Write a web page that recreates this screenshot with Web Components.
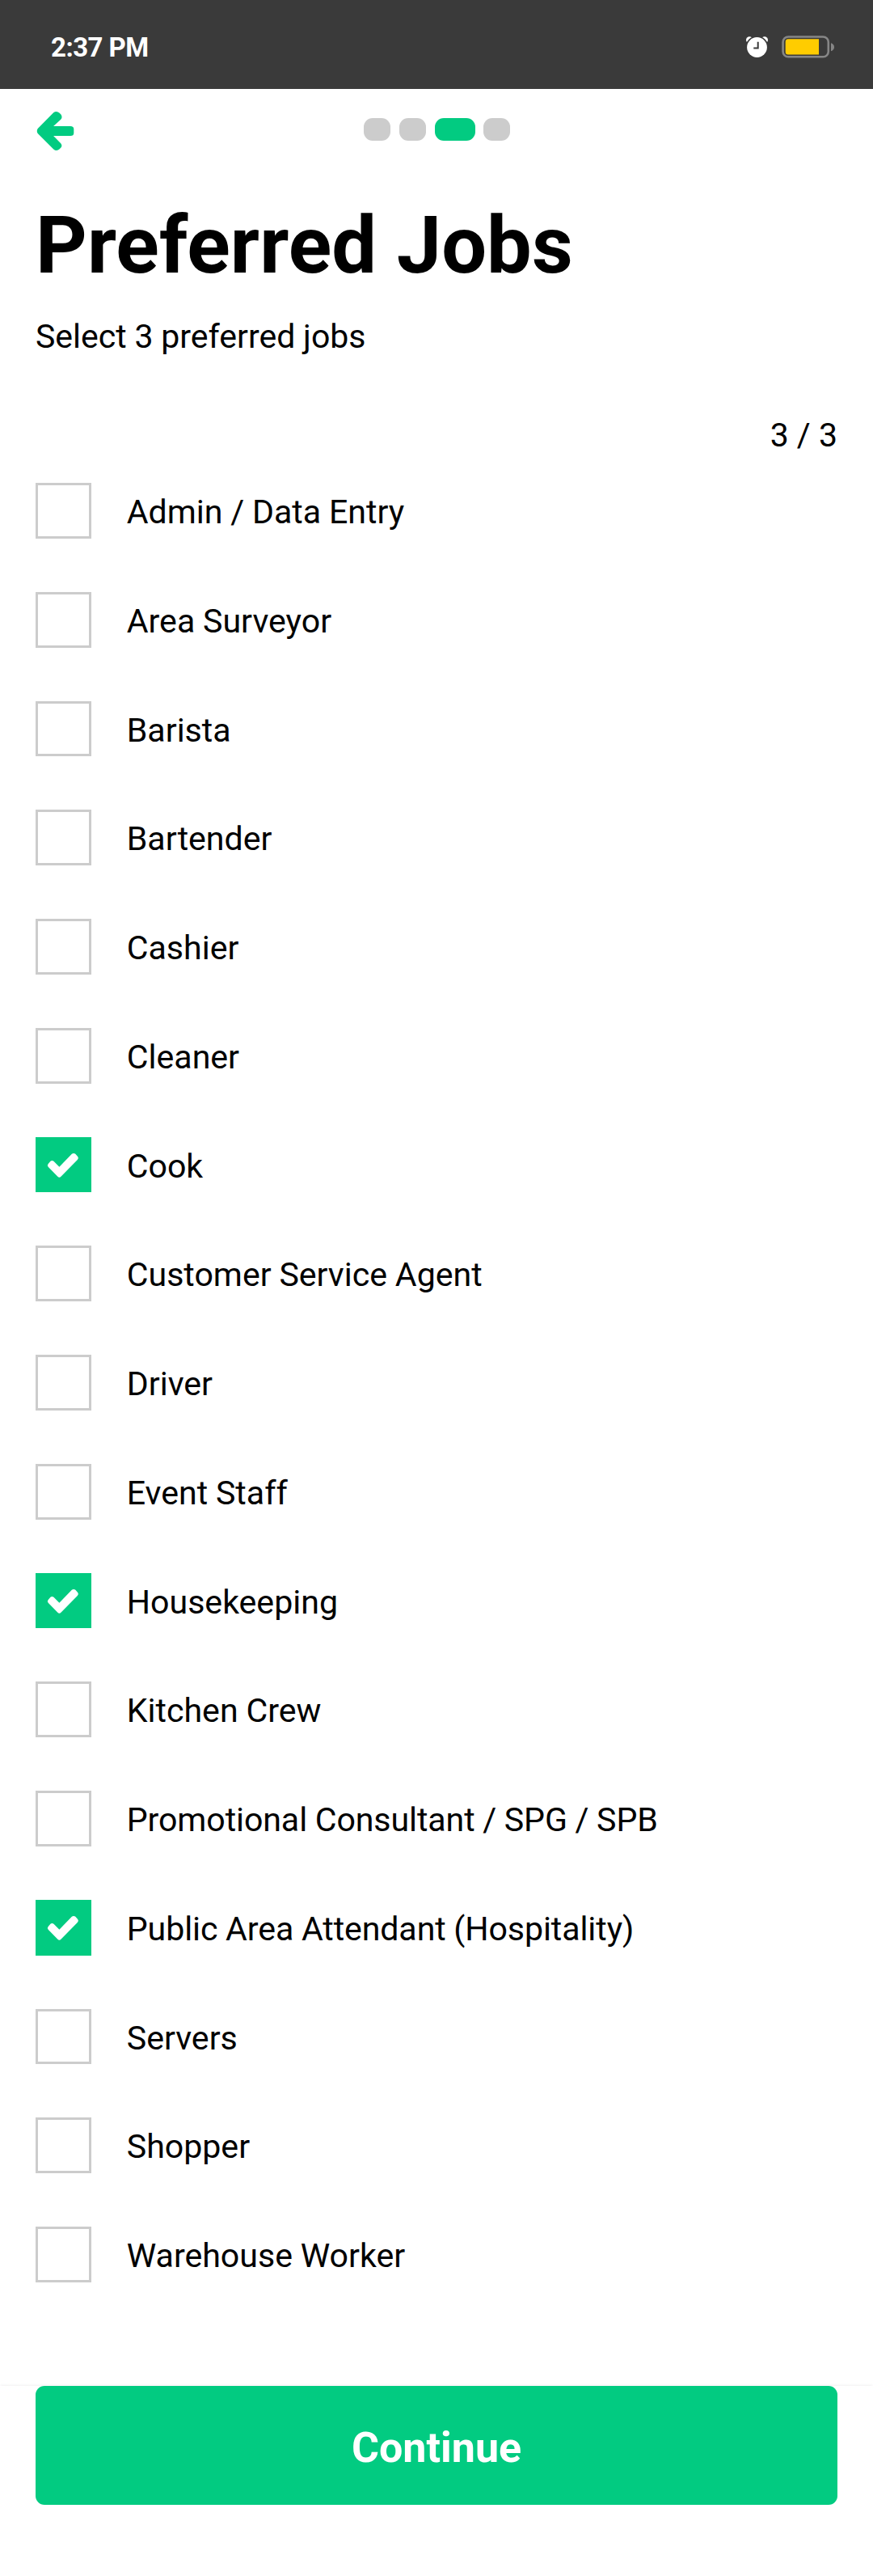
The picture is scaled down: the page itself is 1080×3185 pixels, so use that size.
<!DOCTYPE html>
<html lang="en">
<head>
<meta charset="utf-8">
<title>Preferred Jobs</title>
<style>
html, body { margin: 0; background: #fff; }
body { font-family: Roboto, sans-serif; color: #000; }
</style>
</head>
<body>
<jobs-screen></jobs-screen>
<script>
const define = (name, html, setup) => {
  const t = document.createElement('template');
  t.innerHTML = html;
  customElements.define(name, class extends HTMLElement {
    connectedCallback() {
      if (this.shadowRoot) return;
      this.attachShadow({ mode: 'open' }).append(t.content.cloneNode(true));
      if (setup) setup(this, this.shadowRoot);
    }
  });
};

define('status-bar', `
<style>
:host { display: flex; height: 110px; box-sizing: border-box; padding: 5px 47px 0 63px; align-items: center; justify-content: space-between; background: #3a3a3a; color: #fff; }
span { padding-top: 2px; font-size: 33px; line-height: 40px; font-weight: 700; letter-spacing: -.55px; }
div { display: flex; align-items: center; gap: 16px; }
svg { display: block; }
</style>
<span><slot></slot></span>
<div>
  <svg width="30" height="28" viewBox="0 0 30 28">
    <circle cx="6.2" cy="5.5" r="4.2" fill="#fff"/>
    <circle cx="24.8" cy="5.5" r="4.2" fill="#fff"/>
    <circle cx="15.5" cy="14.5" r="14" fill="#3a3a3a"/>
    <circle cx="15.5" cy="14.5" r="12.4" fill="#fff"/>
    <path d="M16.7 7.8V15.4H11.3" fill="none" stroke="#3a3a3a" stroke-width="2"/>
  </svg>
  <svg width="66" height="28" viewBox="0 0 66 28">
    <rect x="1.6" y="1.5" width="56.2" height="24.8" rx="6.5" fill="none" stroke="#868686" stroke-width="2.6"/>
    <path d="M8 4.3H46V23.5H8Q4.7 23.5 4.7 20V8Q4.7 4.3 8 4.3Z" fill="#fc0"/>
    <path d="M61 9.2Q65 10.5 65 14.2T61 19.2Z" fill="#868686"/>
  </svg>
</div>`);

define('step-dots', `
<style>
:host { display: flex; gap: 11px; margin-left: 1px; }
i { width: 33px; height: 28px; border-radius: 11px; background: #ccc; }
i.on { width: 50px; background: #02cb81; margin-right: -1px; }
</style>`, (host, root) => {
  for (let n = 1; n <= +host.getAttribute('total'); n++) {
    const i = document.createElement('i');
    if (n === +host.getAttribute('current')) i.className = 'on';
    root.append(i);
  }
});

define('nav-header', `
<style>
:host { display: grid; grid-template-columns: 1fr auto 1fr; align-items: center; height: 100px; padding: 0 44px; }
svg { display: block; margin-top: 4px; }
</style>
<svg width="49" height="50" viewBox="0 0 49 50" fill="#02cb81">
  <path d="M22.2 2.2Q26 -.6 29.7 2.8Q34.5 6.6 31.2 10.7L22.1 19H43Q47.3 19 47.3 22.5V27.5Q47.3 31 43 31H22.1L31.2 40.3Q34.2 44 29.7 47.3Q26 50.6 22.2 47.5L2.7 28Q.8 25 2.7 22Z"/>
</svg>
<slot></slot>`);

define('page-heading', `
<style>
:host { display: block; padding: 33px 44px 0; }
h1 { margin: 0; font-size: 99px; line-height: 120px; font-weight: 700; letter-spacing: .1px; }
p { margin: 28px 0 0; font-size: 41px; line-height: 50px; word-spacing: -.4px; }
</style>
<h1><slot></slot></h1><p><slot name="hint"></slot></p>`);

define('selection-count', `
<style>:host { display: block; padding: 72px 44px 0; text-align: right; font-size: 41px; line-height: 50px; }</style>
<slot></slot>`);

define('job-option', `
<style>
:host { display: flex; align-items: center; gap: 44px; height: 68.75px; font-size: 41.1px; line-height: 50px; word-spacing: -.4px; }
:host([tight]) { letter-spacing: -.09px; }
b { box-sizing: border-box; width: 68.75px; height: 68.75px; border: 3px solid #ccc; flex: none; }
:host([checked]) b { border: 0; background: #02cb81; }
svg { display: none; width: 68.75px; height: 68.75px; }
:host([checked]) svg { display: block; }
span { padding-top: 3.5px; }
</style>
<b><svg viewBox="0 0 69 69"><path fill="#fff" d="M15.7 33Q14 35 15.7 36.8L27.5 49Q29.5 50.8 31.5 49L52 28Q54 26 52.4 24L49.5 20.8Q47.3 19.3 45 20.8L29.5 37L22.5 29.8Q20.5 28.2 18.5 29.8Z"/></svg></b>
<span><slot></slot></span>`);

define('job-list', `
<style>:host { display: flex; flex-direction: column; gap: 66px; padding: 34px 44px 0; }</style>
<slot></slot>`);

define('bottom-action', `
<style>
:host { display: block; padding: 0 44px 88px; background: #fff; box-shadow: 0 -1px 3px rgba(0,0,0,.06); }
button { display: block; width: 100%; height: 147px; padding: 6px 0 0; border: 0; border-radius: 11px; background: #02cb81; color: #fff; font: 700 52px/62px Roboto, sans-serif; }
</style>
<button><slot></slot></button>`);

const jobs = ['Admin / Data Entry', 'Area Surveyor', 'Barista', 'Bartender', 'Cashier', 'Cleaner', 'Cook', 'Customer Service Agent', 'Driver', 'Event Staff', 'Housekeeping', 'Kitchen Crew', 'Promotional Consultant / SPG / SPB', 'Public Area Attendant (Hospitality)', 'Servers', 'Shopper', 'Warehouse Worker'];
const chosen = new Set(['Cook', 'Housekeeping', 'Public Area Attendant (Hospitality)']);
const tight = new Set(['Promotional Consultant / SPG / SPB', 'Public Area Attendant (Hospitality)']);

define('jobs-screen', `
<style>:host { display: flex; flex-direction: column; height: 3185px; } bottom-action { margin-top: auto; }</style>
<status-bar>2:37 PM</status-bar>
<nav-header><step-dots total="4" current="3"></step-dots></nav-header>
<page-heading>Preferred Jobs<span slot="hint">Select 3 preferred jobs</span></page-heading>
<selection-count>3 / 3</selection-count>
<job-list>${jobs.map(j => `<job-option${chosen.has(j) ? ' checked' : ''}${tight.has(j) ? ' tight' : ''}>${j}</job-option>`).join('')}</job-list>
<bottom-action>Continue</bottom-action>`);
</script>
</body>
</html>
